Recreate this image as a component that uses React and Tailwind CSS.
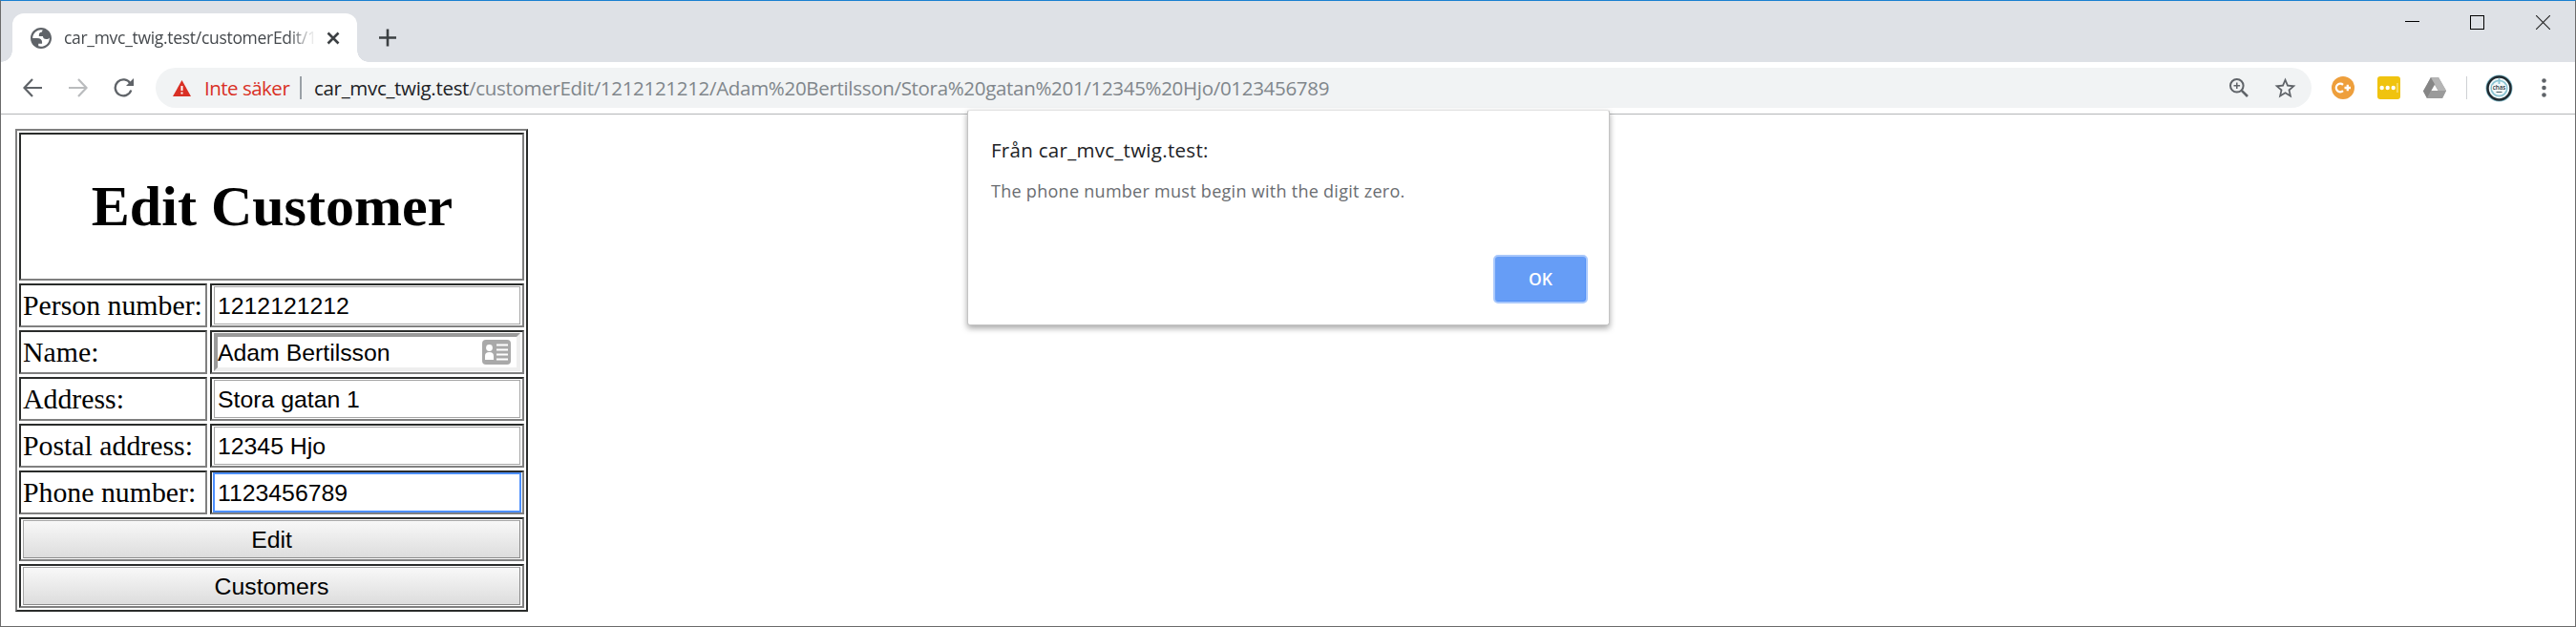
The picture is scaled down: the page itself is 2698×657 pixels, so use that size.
const Field = ({ value, kind }) => {
  if (kind === "inset")
    return (
      <div className="flex h-10 items-center justify-between border-4 border-t-[#9a9a9a] border-l-[#9a9a9a] border-r-[#eeeeee] border-b-[#eeeeee] pr-[6px]">
        <span className="pt-0.5">{value}</span>
        <svg width="30" height="26" viewBox="0 0 30 26">
          <rect width="30" height="26" rx="4" fill="#a9a9a9" />
          <g fill="#fff">
            <circle cx="7.5" cy="8.5" r="3.4" />
            <path d="M3 21v-4c0-2.500 1.500-4 4.500-4s4.500 1.500 4.500 4v4z" />
            <rect x="15" y="4.500" width="12" height="2" />
            <rect x="15" y="9.500" width="12" height="2" />
            <rect x="15" y="14.500" width="12" height="2" />
            <rect x="15" y="19.500" width="12" height="2" />
          </g>
        </svg>
      </div>
    );
  if (kind === "focus")
    return (
      <div className="flex h-10 items-center border border-[#4d90fe] pt-0.5 pl-[3px] outline-1 outline-[#4d90fe]">{value}</div>
    );
  return <div className="flex h-10 items-center border border-[#a6a6a6] pt-0.5 pl-[3px]">{value}</div>;
};

const cell = "border-2 border-t-[#2a2c2b] border-l-[#2a2c2b] border-r-[#808080] border-b-[#808080]";

const rows = [
  ["Person number:", "1212121212", "plain"],
  ["Name:", "Adam Bertilsson", "inset"],
  ["Address:", "Stora gatan 1", "plain"],
  ["Postal address:", "12345 Hjo", "plain"],
  ["Phone number:", "1123456789", "focus"],
];

function TabStrip() {
  return (
    <div className="flex h-16 items-end bg-[#dee1e6]">
      <div className="h-3 w-3 bg-[radial-gradient(circle_at_0_0,#dee1e6_11.500px,#fff_12px)]" />
      <div className="flex h-[51px] w-[361px] items-center rounded-t-xl bg-white pl-[19px]">
        <svg width="22" height="22" viewBox="2 2 20 20" fill="#5f6368">
          <path fillRule="evenodd" d="M12 2C6.480 2 2 6.480 2 12s4.480 10 10 10 10-4.480 10-10S17.520 2 12 2zM4 12h4.400c3.407.022 4.922 1.730 4.543 5.127H9.488v2.470a8.004 8.004 0 0 0 10.498-8.083C19.327 12.504 18.332 13 17 13c-2.137 0-3.206-.916-3.206-2.750h-3.748c-.274-2.728.683-4.092 2.870-4.092 0-.975.327-1.597.811-1.970A8.004 8.004 0 0 0 4 12z" />
        </svg>
        <div className="ml-[13px] w-[264px] whitespace-nowrap font-['Open_Sans',sans-serif] text-[17.500px] tracking-[-0.300px] text-[#45494d] [mask-image:linear-gradient(to_right,#000_235px,transparent_264px)]">
          car_mvc_twig.test/customerEdit/1
        </div>
        <svg className="ml-[11px]" width="14" height="14" viewBox="0 0 14 14" stroke="#3c4043" strokeWidth="2.600">
          <path d="M1.500 1.500l11 11M12.500 1.500l-11 11" />
        </svg>
      </div>
      <div className="h-3 w-3 bg-[radial-gradient(circle_at_100%_0,#dee1e6_11.500px,#fff_12px)]" />
      <svg className="mb-[16px] ml-[11px]" width="18" height="19" viewBox="0 0 18 19" stroke="#3c4043" strokeWidth="2.600">
        <path d="M9 0.500v18M0 9.500h18" />
      </svg>
      <div className="flex h-full flex-1 items-start justify-end gap-[53px] pt-[15px] pr-[26px]">
        <div className="mt-[6px] h-px w-[15px] bg-black" />
        <div className="h-[15px] w-[15px] border border-black" />
        <svg className="ml-px" width="15" height="15" viewBox="0 0 15 15" stroke="#222" strokeWidth="1.100">
          <path d="M0 0l15 15M15 0L0 15" />
        </svg>
      </div>
    </div>
  );
}

function Toolbar() {
  return (
    <div className="flex h-[54px] items-center font-['Open_Sans',sans-serif]">
      <div className="flex w-[162px] items-center gap-7 pl-[23px]">
        <svg width="20" height="20" viewBox="0 0 20 20" fill="none" stroke="#5f6368" strokeWidth="2.200">
          <path d="M20 10H1.500M10 1L1.500 10l8.500 9" />
        </svg>
        <svg width="20" height="20" viewBox="0 0 20 20" fill="none" stroke="#babcbe" strokeWidth="2.200">
          <path d="M0 10h18.500M10 1l8.500 9-8.500 9" />
        </svg>
        <svg className="-ml-px" width="21" height="20" viewBox="0 0 21 20" fill="none" stroke="#5f6368" strokeWidth="2.300">
          <path d="M17.500 5.500A8.500 8.500 0 1 0 18.300 12.500" />
          <path d="M21 0v8h-8z" fill="#5f6368" stroke="none" />
        </svg>
      </div>
      <div className="flex h-[42px] w-[2258px] items-center rounded-full bg-[#f1f3f4] text-[20.500px] leading-7 tracking-[-0.310px]">
        <svg className="ml-[18px]" width="19" height="17" viewBox="0 0 19 17">
          <path d="M9.500 0L19 17H0z" fill="#d93025" />
          <path d="M8.500 6h2v5h-2zM8.500 12.500h2v2h-2z" fill="#fff" />
        </svg>
        <span className="ml-[14px] w-[90px] whitespace-nowrap tracking-[-0.500px] text-[#d93025]">Inte säker</span>
        <span className="ml-[10px] h-6 w-0.5 bg-[#9aa0a6]" />
        <span className="ml-[13px] whitespace-nowrap text-[#202124]">
          car_mvc_twig.test
          <span className="text-[#80868b]">
            /customerEdit/1212121212/Adam%20Bertilsson/Stora%20gatan%201/12345%20Hjo/0123456789
          </span>
        </span>
        <svg className="ml-auto" width="20" height="20" viewBox="0 0 20 20" fill="none" stroke="#5f6368" strokeWidth="2">
          <circle cx="7.800" cy="7.800" r="6.800" />
          <path d="M4.500 7.800h6.600M7.800 4.500v6.600" strokeWidth="1.500" />
          <path d="M12.800 12.800l6.200 6.200" strokeWidth="2.600" />
        </svg>
        <svg className="mr-[16px] ml-[27px]" width="23" height="22" viewBox="1.500 1.500 21 20" fill="#5f6368">
          <path d="M22 9.240l-7.190-.62L12 2 9.190 8.630 2 9.240l5.460 4.730L5.820 21 12 17.270 18.180 21l-1.630-7.030L22 9.240zM12 15.400l-3.760 2.270 1-4.280-3.320-2.880 4.380-.38L12 6.100l1.710 4.040 4.380.38-3.320 2.880 1 4.280L12 15.400z" />
        </svg>
      </div>
      <div className="ml-[21px] flex h-6 w-6 items-center justify-center rounded-full bg-[#ee9f3c]">
        <svg width="18" height="12" viewBox="0 0 18 12" fill="none" stroke="#fff" strokeWidth="2.300">
          <path d="M9 2.800A4.300 4.300 0 1 0 9 9.200M10.500 6H17M13.800 2.800v6.400" />
        </svg>
      </div>
      <div className="ml-6 flex h-6 w-6 items-center justify-center rounded-[3px] bg-[#f0c30f]">
        <svg width="20" height="10" viewBox="0 0 20 10" fill="#fff">
          <circle cx="2.700" cy="5" r="2.200" />
          <circle cx="8.700" cy="5" r="2.200" />
          <circle cx="14.700" cy="5" r="2.200" />
          <rect x="18.300" y="0" width="1.300" height="10" fill="#f8e38c" />
        </svg>
      </div>
      <svg className="ml-6" width="24" height="22" viewBox="0 0 24 22">
        <path d="M8 0h8l8 14-4 8H4l-4-7.500z" fill="#a3a3a3" />
        <path d="M8 0l4 7-8 15-4-7.500z" fill="#868686" />
        <path d="M8 0h8l8 14h-8z" fill="#b5b5b5" />
        <path d="M8.500 14h15.500l-4 8H4z" fill="#9b9b9b" />
        <path d="M12 8l3.500 6h-7z" fill="#fff" />
      </svg>
      <div className="ml-[21px] h-6 w-px bg-[#cfd1d4]" />
      <svg className="ml-[19px]" width="29" height="29" viewBox="0 0 29 29">
        <circle cx="14.500" cy="14.500" r="14" fill="#7fb9c9" />
        <circle cx="14.500" cy="14.500" r="12" fill="#f4f9fa" stroke="#202a30" strokeWidth="2.500" />
        <circle cx="14.500" cy="14.500" r="8.200" fill="none" stroke="#8cc5d4" strokeWidth="1.800" />
        <path d="M14.500 4v6" stroke="#8cc5d4" strokeWidth="1.800" />
        <rect x="7" y="11.500" width="15" height="5" fill="#f4f9fa" />
        <text x="14.500" y="16.200" textAnchor="middle" fontSize="6.200" fontWeight="600" fontFamily="Open Sans, sans-serif" fill="#27343a">chas</text>
        <path d="M11.500 18.500h6" stroke="#53666e" strokeWidth="1.100" />
      </svg>
      <svg className="ml-[30px]" width="5" height="20" viewBox="0 0 5 20" fill="#5f6368">
        <circle cx="2.500" cy="2.500" r="2.300" />
        <circle cx="2.500" cy="10" r="2.300" />
        <circle cx="2.500" cy="17.500" r="2.300" />
      </svg>
    </div>
  );
}

function CustomerForm() {
  return (
    <div className="flex w-[537px] flex-col gap-[3px] border-2 border-t-[#808080] border-l-[#808080] border-r-[#2a2c2b] border-b-[#2a2c2b] p-0.5 text-black">
      <h1 className={`flex h-[155px] items-center justify-center pb-0.5 pl-px font-['Liberation_Serif',serif] text-[60px] font-bold ${cell}`}>
        Edit Customer
      </h1>
      {rows.map(([label, value, kind]) => (
        <div key={label} className="flex h-[46px] gap-[3px]">
          <div className={`flex w-[197px] items-center pl-0.5 font-['Liberation_Serif',serif] text-[29.800px] whitespace-nowrap ${cell}`}>
            {label}
          </div>
          <div className={`flex-1 py-px pr-[2px] pl-[2px] font-['Liberation_Sans',sans-serif] text-[24.800px] ${cell}`}>
            <Field value={value} kind={kind} />
          </div>
        </div>
      ))}
      {["Edit", "Customers"].map((t) => (
        <div key={t} className={`h-[46px] px-[2px] py-px ${cell}`}>
          <button className="block h-10 w-full border border-t-[#a6a6a6] border-r-[#8a8a8a] border-b-[#8a8a8a] border-l-[#a6a6a6] bg-linear-to-b from-[#f8f8f8] to-[#dddddd] pt-px font-['Liberation_Sans',sans-serif] text-[24.800px] leading-[37px]">
            {t}
          </button>
        </div>
      ))}
    </div>
  );
}

export default function App() {
  return (
    <div className="relative h-[657px] w-[2698px] overflow-hidden border border-t-[#1a7fd0] border-r-[#6b6b6b] border-b-[#6b6b6b] border-l-[#6b6b6b] bg-white">
      <TabStrip />
      <Toolbar />
      <div className="border-t border-[#b4b6b8] pt-[15px] pl-[15px]">
        <CustomerForm />
      </div>
      <div className="absolute -bottom-px left-[1518px] h-px w-[514px] bg-[#222222]" />
      <div className="absolute top-[114px] left-[1012px] flex h-[226px] w-[673px] flex-col rounded-[3px] border border-[#c4c4c4] border-t-[#e2e2e2] bg-white pr-[22px] pl-[24px] font-['Open_Sans',sans-serif] shadow-[0_3px_6px_rgba(0,0,0,0.35)]">
        <div className="mt-[27px] text-[20.500px] leading-7 tracking-[0.290px] text-[#202124]">
          Från car_mvc_twig.test:
        </div>
        <div className="mt-[17px] text-[18px] leading-6 tracking-[0.280px] text-[#6a6d71]">
          The phone number must begin with the digit zero.
        </div>
        <button className="mt-auto mb-[22px] h-[51px] w-[99px] self-end rounded-[5px] border-2 border-[#a9c8fb] bg-[#669df6] text-[17.500px] font-semibold text-white shadow-[inset_-1px_-1px_0_#5592f7]">
          OK
        </button>
      </div>
    </div>
  );
}
